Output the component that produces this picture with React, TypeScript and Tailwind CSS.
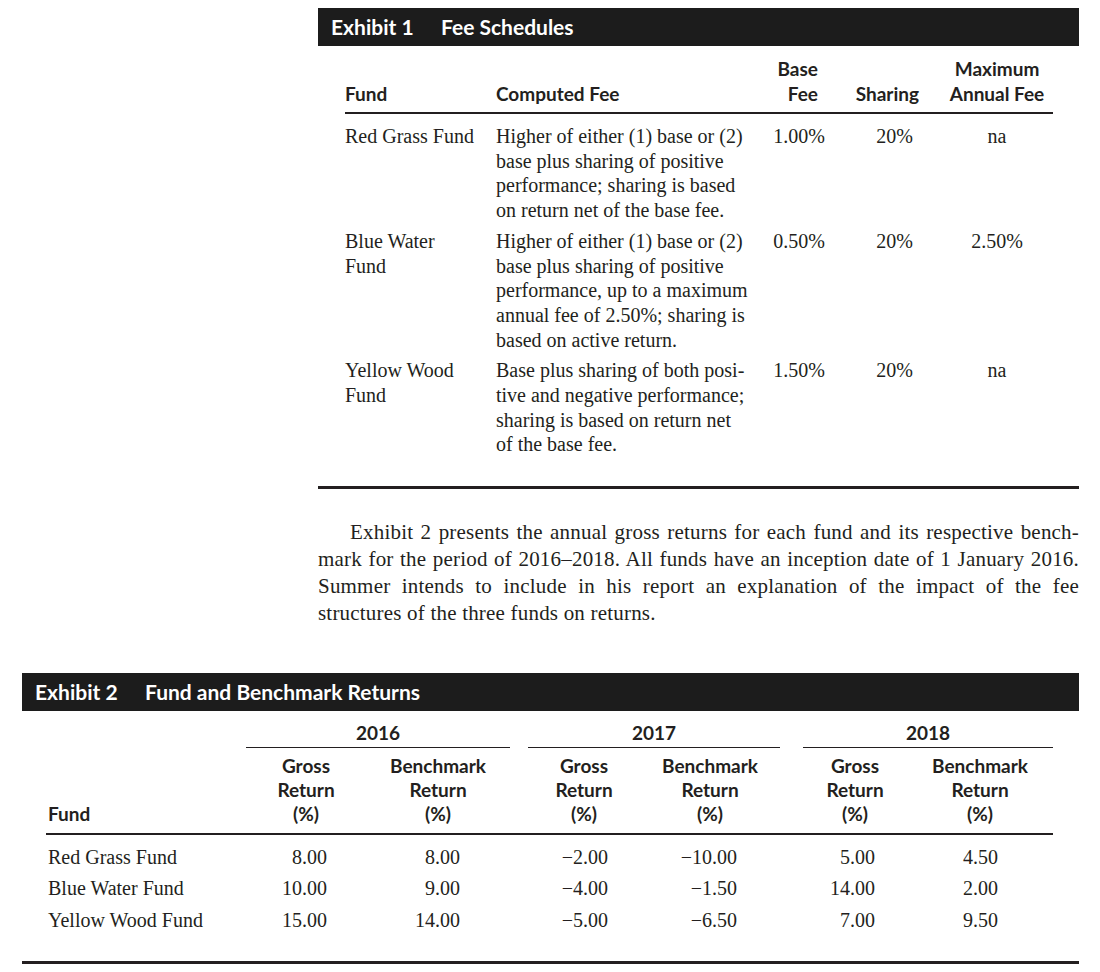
const serif = "font-['Liberation_Serif',serif]";
const sans = "font-['Lato',sans-serif] font-bold";

const feeRows = [
  {
    fund: ["Red Grass Fund"],
    fee: [
      "Higher of either (1) base or (2)",
      "base plus sharing of positive",
      "performance; sharing is based",
      "on return net of the base fee.",
    ],
    base: "1.00%",
    sharing: "20%",
    max: "na",
  },
  {
    fund: ["Blue Water", "Fund"],
    fee: [
      "Higher of either (1) base or (2)",
      "base plus sharing of positive",
      "performance, up to a maximum",
      "annual fee of 2.50%; sharing is",
      "based on active return.",
    ],
    base: "0.50%",
    sharing: "20%",
    max: "2.50%",
  },
  {
    fund: ["Yellow Wood", "Fund"],
    fee: [
      "Base plus sharing of both posi-",
      "tive and negative performance;",
      "sharing is based on return net",
      "of the base fee.",
    ],
    base: "1.50%",
    sharing: "20%",
    max: "na",
  },
];

const returns = [
  ["Red Grass Fund", "8.00", "8.00", "\u22122.00", "\u221210.00", "5.00", "4.50"],
  ["Blue Water Fund", "10.00", "9.00", "\u22124.00", "\u22121.50", "14.00", "2.00"],
  ["Yellow Wood Fund", "15.00", "14.00", "\u22125.00", "\u22126.50", "7.00", "9.50"],
];

const paragraph = [
  "Exhibit 2 presents the annual gross returns for each fund and its respective bench-",
  "mark for the period of 2016\u20132018. All funds have an inception date of 1 January 2016.",
  "Summer intends to include in his report an explanation of the impact of the fee",
];

const grid2 = "grid grid-cols-[200px_120px_144px_18px_112px_140px_23px_104px_146px]";
const grid1 = "grid grid-cols-[151px_274px_55px_116px_112px]";

function TitleBar({ num, title }: { num: string; title: string }) {
  return (
    <div className={`h-[38px] bg-[#1c1c1c] text-white flex items-center px-[13px] text-[21px] ${sans}`}>
      <span className="w-[110px]">{num}</span>
      <span>{title}</span>
    </div>
  );
}

export default function App() {
  return (
    <div className="min-h-[972px] w-[1100px] bg-white text-[#231f20] pt-2">
      {/* Exhibit 1 */}
      <section className="ml-[318px] mr-[21px]">
        <TitleBar num="Exhibit 1" title="Fee Schedules" />
        <div className="pl-[27px] pr-[26px]">
          <div className={`${grid1} items-end border-b-2 border-[#231f20] pt-[10px] pb-[6px] text-[19px] leading-[25px] ${sans}`}>
            <div>Fund</div>
            <div>Computed Fee</div>
            <div className="text-right pr-[7px]">Base<br />Fee</div>
            <div className="text-right pr-[22px]">Sharing</div>
            <div className="text-center">Maximum<br />Annual Fee</div>
          </div>
          <div className={`pt-[10px] pb-[29px] text-[20px] leading-[24.7px] ${serif}`}>
            {feeRows.map((r, i) => (
              <div key={i} className={`${grid1} ${i > 0 ? "mt-[6px]" : ""}`}>
                <div>
                  {r.fund.map((l) => (
                    <div key={l}>{l}</div>
                  ))}
                </div>
                <div className="whitespace-nowrap">
                  {r.fee.map((l) => (
                    <div key={l}>{l}</div>
                  ))}
                </div>
                <div className="text-right">{r.base}</div>
                <div className="text-right pr-[28px]">{r.sharing}</div>
                <div className="text-center">{r.max}</div>
              </div>
            ))}
          </div>
        </div>
        <div className="h-[3px] bg-[#231f20]" />

        {/* Paragraph */}
        <div className={`mt-[30px] text-[21px] leading-[27px] tracking-[0.2px] ${serif}`}>
          {paragraph.map((l, i) => (
            <div key={i} className={`text-justify [text-align-last:justify] ${i === 0 ? "pl-[32px]" : ""}`}>
              {l}
            </div>
          ))}
          <div>structures of the three funds on returns.</div>
        </div>
      </section>

      {/* Exhibit 2 */}
      <section className="ml-[22px] mr-[21px] mt-[46px]">
        <TitleBar num="Exhibit 2" title="Fund and Benchmark Returns" />
        <div className="pl-[24px] pr-[26px]">
          <div className={`${grid2} pt-[10px] text-[19px] leading-[24px] ${sans}`}>
            <div />
            <div className="col-span-2 text-center border-b border-[#231f20] pb-[2px]">2016</div>
            <div />
            <div className="col-span-2 text-center border-b border-[#231f20] pb-[2px]">2017</div>
            <div />
            <div className="col-span-2 text-center border-b border-[#231f20] pb-[2px]">2018</div>
          </div>
          <div className={`${grid2} items-end mt-[6px] border-b-2 border-[#231f20] pb-[7px] text-[19px] leading-[24px] text-center ${sans}`}>
            <div className="text-left pl-[2px]">Fund</div>
            <div>Gross<br />Return<br />(%)</div>
            <div>Benchmark<br />Return<br />(%)</div>
            <div />
            <div>Gross<br />Return<br />(%)</div>
            <div>Benchmark<br />Return<br />(%)</div>
            <div />
            <div>Gross<br />Return<br />(%)</div>
            <div>Benchmark<br />Return<br />(%)</div>
          </div>
          <div className={`pt-[6px] pb-[25px] text-[20px] ${serif}`}>
            {returns.map((r) => (
              <div key={r[0]} className={`${grid2} h-[31.5px] items-center`}>
                <div className="pl-[2px]">{r[0]}</div>
                <div className="text-right pr-[39px]">{r[1]}</div>
                <div className="text-right pr-[50px]">{r[2]}</div>
                <div />
                <div className="text-right pr-[32px]">{r[3]}</div>
                <div className="text-right pr-[43px]">{r[4]}</div>
                <div />
                <div className="text-right pr-[32px]">{r[5]}</div>
                <div className="text-right pr-[55px]">{r[6]}</div>
              </div>
            ))}
          </div>
        </div>
        <div className="h-[3px] bg-[#231f20]" />
      </section>
    </div>
  );
}
